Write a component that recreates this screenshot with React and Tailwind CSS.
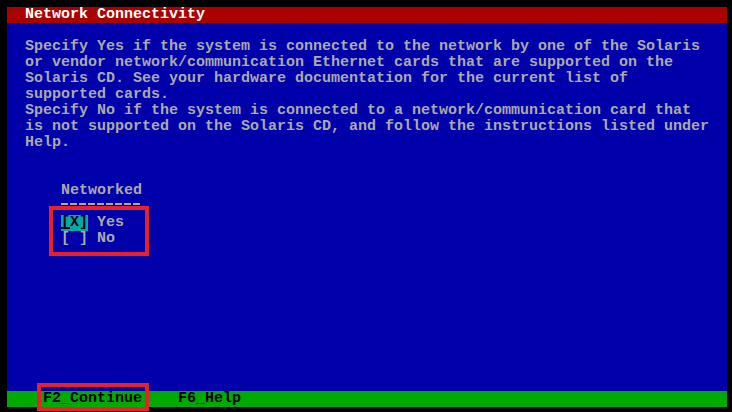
import React from 'react';

// 80x25 text-mode screen, each cell 9x16 px
const bodyLines = [
  'Specify Yes if the system is connected to the network by one of the Solaris',
  'or vendor network/communication Ethernet cards that are supported on the',
  'Solaris CD. See your hardware documentation for the current list of',
  'supported cards.',
  'Specify No if the system is connected to a network/communication card that',
  'is not supported on the Solaris CD, and follow the instructions listed under',
  'Help.',
];

const mono = { fontFamily: '"Liberation Mono", "DejaVu Sans Mono", monospace' };

export default function App() {
  return (
    <div className="relative w-[732px] h-[412px] bg-black pt-[7px] pl-[7px] overflow-hidden" style={mono}>
      <div className="w-[720px] h-[400px] bg-[#0000aa] flex flex-col text-[15px] leading-[16px] font-bold text-[#aaaaaa] whitespace-pre">
        {/* title bar */}
        <div className="h-[16px] bg-[#aa0000] text-white pl-[18px]">Network Connectivity</div>

        {/* help text */}
        <div className="pl-[18px] mt-[16px]">
          {bodyLines.map((line, i) => (
            <div key={i} className="h-[16px]">{line}</div>
          ))}
        </div>

        {/* option list */}
        <div className="pl-[54px] mt-[32px]">
          <div className="h-[16px]">Networked</div>
          <div className="h-[16px] flex gap-[2px] pt-[4px]">
            {Array.from({ length: 9 }).map((_, i) => (
              <div key={i} className="w-[7px] h-[2px] bg-[#aaaaaa]" />
            ))}
          </div>
          <div className="h-[16px] flex">
            <span className="relative w-[27px] bg-[#00aaaa] text-black">
              [X]
              <span className="absolute left-0 bottom-[2px] w-[9px] h-[2px] bg-black" />
            </span>
            <span> Yes</span>
          </div>
          <div className="h-[16px]">[ ] No</div>
        </div>

        {/* function key bar */}
        <div className="mt-auto h-[16px] bg-[#00aa00] text-black pl-[36px]">
          F2_Continue    F6_Help
        </div>
      </div>

      {/* red annotation boxes */}
      <div className="absolute left-[49px] top-[206px] w-[100px] h-[50px] border-4 border-[#e8202a]" />
      <div className="absolute left-[37px] top-[383px] w-[112px] h-[28px] border-4 border-[#e8202a]" />
    </div>
  );
}
